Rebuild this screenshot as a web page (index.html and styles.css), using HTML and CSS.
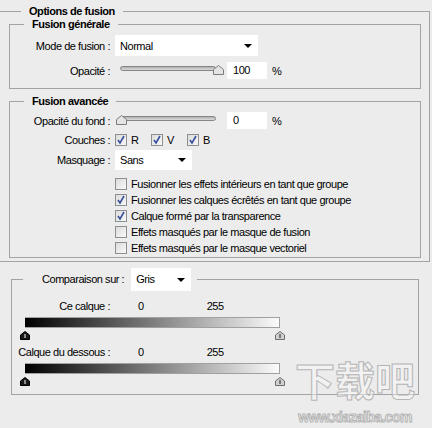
FILE: index.html
```html
<!DOCTYPE html>
<html>

<head>
    <title>Options de fusion</title>
    <link rel="stylesheet" href="styles.css">
</head>

<body>
    <!-- Options de fusion -->
    <fieldset class="outer">
        <legend class="outer-title">Options de fusion</legend>

        <!-- Fusion générale -->
        <fieldset class="group group-general">
            <legend>Fusion générale</legend>
            <div class="row row-mode">
                <span class="label">Mode de fusion :</span>
                <div class="select select-mode"><span>Normal</span><i class="arrow"></i></div>
            </div>
            <div class="row row-opacity">
                <span class="label">Opacité :</span>
                <div class="slider">
                    <div class="track"></div>
                    <svg class="knob knob-max" width="11" height="10" viewBox="0 0 11 10"><polygon points="0.5,9.5 0.5,4.5 5.5,0.5 10.5,4.5 10.5,9.5" fill="#e4e4e4" stroke="#7c7c7c"/></svg>
                </div>
                <div class="field">100</div>
                <span class="pct">%</span>
            </div>
        </fieldset>

        <!-- Fusion avancée -->
        <fieldset class="group group-advanced">
            <legend>Fusion avancée</legend>
            <div class="row row-opacity">
                <span class="label">Opacité du fond :</span>
                <div class="slider">
                    <div class="track"></div>
                    <svg class="knob knob-min" width="11" height="10" viewBox="0 0 11 10"><polygon points="0.5,9.5 0.5,4.5 5.5,0.5 10.5,4.5 10.5,9.5" fill="#e4e4e4" stroke="#7c7c7c"/></svg>
                </div>
                <div class="field">0</div>
                <span class="pct">%</span>
            </div>
            <div class="row row-channels">
                <span class="label">Couches :</span>
                <span class="check on"></span><span class="channel">R</span>
                <span class="check on"></span><span class="channel">V</span>
                <span class="check on"></span><span class="channel">B</span>
            </div>
            <div class="row row-knockout">
                <span class="label">Masquage :</span>
                <div class="select select-knockout"><span>Sans</span><i class="arrow"></i></div>
            </div>
            <ul class="options">
                <li><span class="check"></span>Fusionner les effets intérieurs en tant que groupe</li>
                <li><span class="check on"></span>Fusionner les calques écrêtés en tant que groupe</li>
                <li><span class="check on"></span>Calque formé par la transparence</li>
                <li><span class="check"></span>Effets masqués par le masque de fusion</li>
                <li><span class="check"></span>Effets masqués par le masque vectoriel</li>
            </ul>
        </fieldset>
    </fieldset>

    <!-- Comparaison sur -->
    <fieldset class="blend-if">
        <legend>
            <span class="legend-label">Comparaison sur :</span>
            <div class="select select-gray"><span>Gris</span><i class="arrow"></i></div>
        </legend>

        <div class="values">
            <span class="label">Ce calque :</span>
            <span class="num-low">0</span>
            <span class="num-high">255</span>
        </div>
        <div class="ramp"></div>
        <div class="stops">
            <svg width="10" height="9" viewBox="0 0 10 9"><polygon points="0.5,8.5 0.5,4 5,0.5 9.5,4 9.5,8.5" fill="#1a1a1a" stroke="#000"/><line x1="5" y1="3" x2="5" y2="7" stroke="#fff"/></svg>
            <svg width="10" height="9" viewBox="0 0 10 9"><polygon points="0.5,8.5 0.5,4 5,0.5 9.5,4 9.5,8.5" fill="#cfcfcf" stroke="#6e6e6e"/><line x1="5" y1="3" x2="5" y2="7" stroke="#222"/></svg>
        </div>

        <div class="values values-under">
            <span class="label">Calque du dessous :</span>
            <span class="num-low">0</span>
            <span class="num-high">255</span>
        </div>
        <div class="ramp"></div>
        <div class="stops">
            <svg width="10" height="9" viewBox="0 0 10 9"><polygon points="0.5,8.5 0.5,4 5,0.5 9.5,4 9.5,8.5" fill="#1a1a1a" stroke="#000"/><line x1="5" y1="3" x2="5" y2="7" stroke="#fff"/></svg>
            <svg width="10" height="9" viewBox="0 0 10 9"><polygon points="0.5,8.5 0.5,4 5,0.5 9.5,4 9.5,8.5" fill="#cfcfcf" stroke="#6e6e6e"/><line x1="5" y1="3" x2="5" y2="7" stroke="#222"/></svg>
        </div>
    </fieldset>

    <!-- Watermark -->
    <div class="watermark">
        <div class="wm-big">下载吧</div>
        <div class="wm-small">www.xiazaiba.com</div>
    </div>
</body>

</html>
```

FILE: styles.css
```css
/* General page */
body {
    margin: 0;
    background-color: #ececec;
    font-family: "Liberation Sans", Arial, sans-serif;
    font-size: 11px;
    letter-spacing: -0.45px;
    color: #000;
    position: relative;
    height: 428px;
    overflow: hidden;
}

fieldset {
    margin: 0;
    padding: 0;
    min-inline-size: 0;
    border: 1px solid #a3a3a3;
}

legend {
    font-weight: bold;
    line-height: 13px;
    padding: 0 8px;
}

/* Outer box, left edge hidden */
.outer {
    margin: 5px 2px 0 -10px;
    padding: 0 8px 3px 18px;
}

.outer-title {
    margin-left: 12px;
}

/* Inner groups */
.group {
    padding: 0 0 9px 0;
}

.group legend {
    margin-left: 14px;
}

.group-advanced {
    margin-top: 6px;
    padding-bottom: 1px;
}

/* Rows with label column */
.row {
    display: flex;
    align-items: center;
}

.label {
    width: 100px;
    margin-right: 5px;
    text-align: right;
    white-space: nowrap;
}

.row-mode {
    margin-top: 4px;
}

.row-opacity {
    margin-top: 6px;
    height: 17px;
}

.group-advanced .row-opacity {
    margin-top: 4px;
}

.row-channels {
    margin-top: 4px;
    height: 14px;
}

.row-knockout {
    margin-top: 3px;
}

/* Drop-down boxes */
.select {
    background: #fff;
    height: 21px;
    display: flex;
    align-items: center;
    justify-content: space-between;
    padding: 0 6px 0 5px;
    box-sizing: border-box;
}

.select-mode {
    width: 143px;
}

.select-knockout {
    width: 77px;
    height: 20px;
}

.select-gray {
    width: 60px;
    height: 23px;
    font-weight: normal;
}

.arrow {
    width: 0;
    height: 0;
    border-left: 4px solid transparent;
    border-right: 4px solid transparent;
    border-top: 4px solid #000;
}

/* Sliders */
.slider {
    position: relative;
    width: 109px;
    height: 17px;
}

.track {
    margin: 4px 0 0 5px;
    width: 94px;
    height: 3px;
    border: 1px solid #858585;
    border-radius: 3px;
    background: linear-gradient(#b0b0b0, #dcdcdc);
}

.knob {
    position: absolute;
    top: 3px;
}

.knob-max {
    left: 98px;
}

.knob-min {
    left: 1px;
}

/* Number fields */
.field {
    margin-left: 3px;
    width: 40px;
    height: 17px;
    line-height: 17px;
    padding-left: 6px;
    box-sizing: border-box;
    background: #fff;
}

.pct {
    margin-left: 5px;
}

/* Check boxes */
.check {
    display: inline-block;
    width: 12px;
    height: 12px;
    box-sizing: border-box;
    border: 1px solid #8e8f8f;
    background: linear-gradient(135deg, #dcdcdc, #f8f8f8);
    flex: none;
}

.check.on {
    background: url("data:image/svg+xml,%3Csvg xmlns='http://www.w3.org/2000/svg' width='10' height='10'%3E%3Cpath d='M2 5 L4 8 L8 1' fill='none' stroke='%23384f9c' stroke-width='1.6'/%3E%3C/svg%3E") no-repeat center, linear-gradient(135deg, #dcdcdc, #f8f8f8);
}

.channel {
    width: 20px;
    margin-left: 4px;
}

/* Option list */
.options {
    list-style: none;
    margin: 6px 0 0 105px;
    padding: 0;
}

.options li {
    display: flex;
    align-items: center;
    height: 16px;
    white-space: nowrap;
}

.options .check {
    margin-right: 4px;
}

/* Comparaison sur */
.blend-if {
    margin: 6px 13px 0 11px;
    padding: 0 0 8px 0;
}

.blend-if legend {
    display: flex;
    align-items: center;
    margin-left: 11px;
    padding: 0 6px 0 19px;
    font-weight: normal;
}

.legend-label {
    margin-right: 7px;
}

.values {
    display: flex;
    margin-top: 9px;
    line-height: 13px;
}

.values .label {
    width: 98px;
    margin-right: 0;
}

.num-low {
    margin-left: 28px;
}

.num-high {
    margin-left: 63px;
}

.values-under {
    margin-top: 6px;
}

.ramp {
    margin: 4px 0 0 13px;
    width: 255px;
    height: 11px;
    box-sizing: border-box;
    border: 1px solid #a0a0a0;
    border-left: none;
    background: linear-gradient(to right, #000, #fbfbfb);
}

.stops {
    display: flex;
    justify-content: space-between;
    width: 265px;
    margin: 3px 0 0 8px;
    height: 9px;
}

/* Watermark over the corner */
.watermark {
    position: absolute;
    left: 288px;
    top: 350px;
    width: 134px;
    text-align: center;
    letter-spacing: 0;
    color: rgba(250, 250, 250, 0.45);
    -webkit-text-stroke: 1px #b5b5b5;
}

.wm-big {
    font-family: "Noto Sans CJK SC", sans-serif;
    font-weight: bold;
    font-size: 40px;
    line-height: 58px;
}

.wm-small {
    margin-top: 1px;
    font-family: "Liberation Sans", Arial, sans-serif;
    font-weight: bold;
    font-size: 14px;
    line-height: 16px;
    letter-spacing: -0.6px;
}
```
